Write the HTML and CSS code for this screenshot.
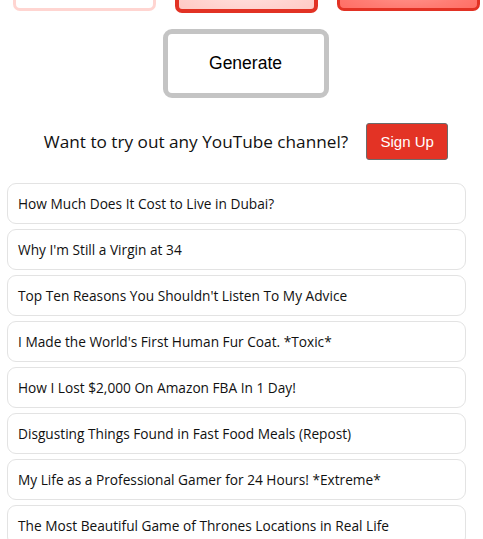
FILE: index.html
```html
<!DOCTYPE html>
<html>
<head>
    <title>Video Title Generator</title>
    <link rel="stylesheet" href="styles.css">
</head>
<body>
    <div class="mode-row">
        <button class="mode mode-light"></button>
        <button class="mode mode-medium"></button>
        <button class="mode mode-hot"></button>
    </div>

    <div class="generate-wrap">
        <button class="generate">Generate</button>
    </div>

    <div class="signup-row">
        <span class="signup-text">Want to try out any YouTube channel?</span>
        <button class="signup">Sign Up</button>
    </div>

    <div class="title-list" id="titleList"></div>

    <script>
        var titles = [
            'How Much Does It Cost to Live in Dubai?',
            "Why I'm Still a Virgin at 34",
            "Top Ten Reasons You Shouldn't Listen To My Advice",
            "I Made the World's First Human Fur Coat. *Toxic*",
            'How I Lost $2,000 On Amazon FBA In 1 Day!',
            'Disgusting Things Found in Fast Food Meals (Repost)',
            'My Life as a Professional Gamer for 24 Hours! *Extreme*',
            'The Most Beautiful Game of Thrones Locations in Real Life'
        ];

        var list = document.getElementById('titleList');
        titles.forEach(function(title) {
            var item = document.createElement('div');
            item.className = 'title-card';
            item.textContent = title;
            list.appendChild(item);
        });
    </script>
</body>
</html>
```

FILE: styles.css
```css
body {
    margin: 0;
    background-color: #fff;
    font-family: "Liberation Sans", Arial, sans-serif;
    color: #111;
}

.mode-row {
    display: flex;
    align-items: flex-start;
    gap: 19px;
    padding-left: 13px;
    margin-top: -40px;
}

.mode {
    box-sizing: border-box;
    width: 143px;
    height: 51px;
    border-radius: 7px;
    border: 3px solid #ffd5d1;
    background-color: #fff;
}

.mode-medium {
    height: 53px;
    margin-bottom: -2px;
    border: 4px solid #e23224;
    background: radial-gradient(ellipse at 50% 30%, #fff0ee 0%, #ffd3cf 70%, #ffc9c4 100%);
}

.mode-hot {
    border: 3px solid #e23224;
    background: radial-gradient(ellipse at 50% 30%, #ffb0aa 0%, #ff7d74 70%, #ff6e64 100%);
}

.generate-wrap {
    display: flex;
    justify-content: center;
    margin-top: 18px;
    padding-left: 8px;
}

.generate {
    box-sizing: border-box;
    width: 166px;
    height: 69px;
    border: 5px solid #c4c4c4;
    border-radius: 9px;
    background-color: #fff;
    font-family: "Liberation Sans", Arial, sans-serif;
    font-size: 17.5px;
    color: #000;
}

.signup-row {
    display: flex;
    justify-content: center;
    align-items: center;
    gap: 18px;
    margin-top: 25px;
    padding-left: 9px;
}

.signup-text {
    font-family: "Open Sans", sans-serif;
    font-size: 17.2px;
    color: #111;
}

.signup {
    box-sizing: border-box;
    width: 82px;
    height: 37px;
    background-color: #e33325;
    border: 1px solid #6b6b6b;
    border-radius: 3px;
    color: #fff;
    font-family: "Liberation Sans", Arial, sans-serif;
    font-size: 15px;
}

.title-list {
    display: flex;
    flex-direction: column;
    gap: 5px;
    margin: 23px 17px 0 7px;
}

.title-card {
    box-sizing: border-box;
    height: 41px;
    display: flex;
    align-items: center;
    padding-left: 10px;
    border: 1px solid #e3e3e3;
    border-radius: 9px;
    font-family: "Open Sans", sans-serif;
    font-size: 13.7px;
    color: #111;
}
```
